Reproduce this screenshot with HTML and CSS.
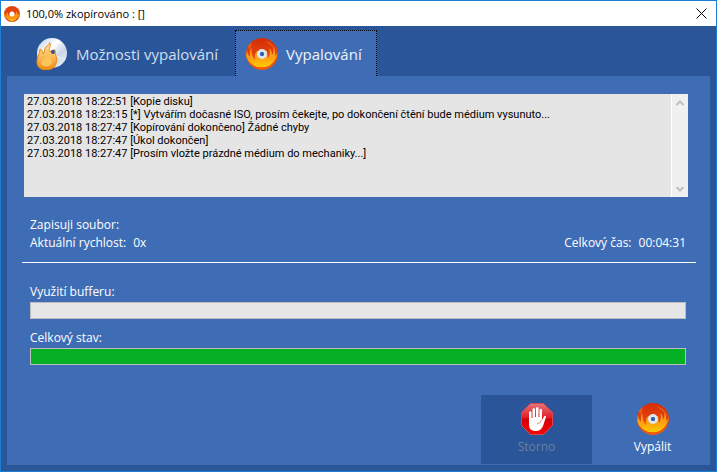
FILE: index.html
```
<!DOCTYPE html>
<html lang="cs">
<head>
    <meta charset="UTF-8">
    <meta name="viewport" content="width=device-width, initial-scale=1.0">
    <title>100,0% zkopírováno : []</title>
    <link rel="stylesheet" href="styles.css">
</head>
<body>
    <svg class="sprite" aria-hidden="true">
        <defs>
            <linearGradient id="discRed" x1="0" y1="0" x2="0" y2="1">
                <stop offset="0" stop-color="#d42c08"/>
                <stop offset="1" stop-color="#f25a0c"/>
            </linearGradient>
            <linearGradient id="discFlame" x1="0" y1="0" x2="0" y2="1">
                <stop offset="0" stop-color="#f58a28"/>
                <stop offset="0.6" stop-color="#fda410"/>
                <stop offset="1" stop-color="#ffce00"/>
            </linearGradient>
            <linearGradient id="silver" x1="0" y1="0" x2="1" y2="1">
                <stop offset="0" stop-color="#b9cbe2"/>
                <stop offset="0.4" stop-color="#ffffff"/>
                <stop offset="0.65" stop-color="#c9d6e8"/>
                <stop offset="1" stop-color="#f2f6fb"/>
            </linearGradient>
            <linearGradient id="gold" x1="0" y1="0" x2="0" y2="1">
                <stop offset="0" stop-color="#fbe0a0"/>
                <stop offset="0.5" stop-color="#fbbf5c"/>
                <stop offset="1" stop-color="#ee8a10"/>
            </linearGradient>
            <linearGradient id="stopRed" x1="0" y1="0" x2="0" y2="1">
                <stop offset="0" stop-color="#e8737a"/>
                <stop offset="0.45" stop-color="#e02026"/>
                <stop offset="0.5" stop-color="#d80008"/>
                <stop offset="1" stop-color="#f00808"/>
            </linearGradient>
        </defs>
        <symbol id="burn" viewBox="0 0 32 32">
            <circle cx="16" cy="16" r="16" fill="url(#discRed)"/>
            <path d="M.8 12C1.500 15 2 17 4 19C3.500 15 4 12 5.500 10C5.500 15 6 18 9 22C8.500 18 9 15 11 13L21 13L22 20C24 18 24 13 23.500 10C25.500 12 26 14 26 17C28 14 28 11 26.500 8C29 10 29.500 14 29 18C30 17 31 16 31.500 14A16 16 0 0 1 .2 18Z" fill="url(#discFlame)"/>
            <path d="M2 8C4 5 5 5 6 4C5 7 5 9 4 12C3 11 2.500 10 2 8ZM19 3C24 4 28 7 30 12C27 9 23 6 19 3Z" fill="#ec5a18"/>
            <circle cx="16" cy="16" r="3.500" fill="#4a76b8" stroke="#dfe5ee" stroke-width="3"/>
            <circle cx="16" cy="16" r="2" fill="#2f5fa6"/>
        </symbol>
        <symbol id="burn-small" viewBox="0 0 16 16">
            <circle cx="8" cy="8" r="8" fill="#e04410"/>
            <path d="M.2 7L2 10L3 6L5 10L8 5L11 9L13 5L14 9L15.800 7A8 8 0 0 1 .2 9Z" fill="#fb9414"/>
            <path d="M3 12Q8 15 13 12Q11 15 8 15.500Q5 15 3 12Z" fill="#fdc020"/>
            <circle cx="8" cy="8" r="2.500" fill="#fff"/>
        </symbol>
        <symbol id="options" viewBox="0 0 32 32">
            <circle cx="16" cy="15" r="15" fill="url(#silver)"/>
            <path d="M19 13L27 6M20 18L29 22" stroke="#dfe8f3" stroke-width="2"/>
            <path d="M8 31.500C3 31 .8 28 1 23C1.200 18 4 16 4 11C6 12 7 14 7 16C9 14 8 11 10 9C12.500 7 13.500 6 13.500 4.500C16 8 11.500 11 14 14C16 12 17 12 19 12C18.500 15 20.500 17 20.500 22C20.500 28 17 31.500 12 31.500Z" fill="url(#gold)" stroke="#e68a18"/>
            <path d="M5 25C6 20 11 21 12 16C13 21 17 21 16 25C15 29 6 30 5 25Z" fill="#fbc45c"/>
            <circle cx="17" cy="14" r="2" fill="#34507c"/>
        </symbol>
        <symbol id="stop" viewBox="0 0 32 32">
            <path d="M9.500.5H22.500L31.500 9.500V22.500L22.500 31.500H9.500L.5 22.500V9.500Z" fill="url(#stopRed)" stroke="#d34a54"/>
            <path d="M8 19V9Q9.200 7.500 10.500 9V15H11.500V6Q12.800 4 14 6V14H15V5Q16.300 3 17.500 5V14H18.500V6.500Q19.800 5 21 6.500V17L23 13.500Q25 12 25 14L22 23Q20 28 15 28Q8 28 8 22Z" fill="#fff"/>
            <path d="M16 21Q20 20 20.500 17" fill="none" stroke="#e88" stroke-width="1"/>
        </symbol>
    </svg>

    <div class="window">
        <header class="titlebar">
            <svg class="app-icon"><use href="#burn-small"/></svg>
            <span class="title">100,0% zkopírováno : []</span>
            <button type="button" class="close" aria-label="Zavřít">
                <svg class="close-icon" viewBox="0 0 11 11"><path d="M.5.5L10.500 10.500M10.500.5L.5 10.500"/></svg>
            </button>
        </header>

        <nav class="tabs" role="tablist">
            <button type="button" class="tab" role="tab" aria-selected="false">
                <svg class="icon"><use href="#options"/></svg>
                Možnosti vypalování
            </button>
            <button type="button" class="tab active" role="tab" aria-selected="true">
                <svg class="icon"><use href="#burn"/></svg>
                Vypalování
            </button>
        </nav>

        <main class="panel">
            <div class="log">
                <textarea class="log-text" readonly aria-label="Protokol">27.03.2018 18:22:51 [Kopie disku]
27.03.2018 18:23:15 [*] Vytvářím dočasné ISO, prosím čekejte, po dokončení čtění bude médium vysunuto...
27.03.2018 18:27:47 [Kopírování dokončeno] Žádné chyby
27.03.2018 18:27:47 [Úkol dokončen]
27.03.2018 18:27:47 [Prosím vložte prázdné médium do mechaniky...]</textarea>
                <div class="scrollbar">
                    <button type="button" class="scroll-btn" disabled aria-label="Nahoru">
                        <svg viewBox="0 0 8 6"><path d="M.5 5L4 1.500L7.500 5"/></svg>
                    </button>
                    <button type="button" class="scroll-btn" disabled aria-label="Dolů">
                        <svg viewBox="0 0 8 6"><path d="M.5 1L4 4.500L7.500 1"/></svg>
                    </button>
                </div>
            </div>

            <div class="status">
                <div class="status-row">Zapisuji soubor:</div>
                <div class="status-row">
                    <span class="pair"><span>Aktuální rychlost:</span><span>0x</span></span>
                    <span class="pair"><span>Celkový čas:</span><span>00:04:31</span></span>
                </div>
            </div>

            <hr class="divider">

            <div class="progress-group">
                <label for="buffer">Využití bufferu:</label>
                <progress id="buffer" class="bar" value="0" max="100"></progress>
            </div>
            <div class="progress-group">
                <label for="total">Celkový stav:</label>
                <progress id="total" class="bar" value="100" max="100"></progress>
            </div>

            <footer class="actions">
                <button type="button" class="action" disabled>
                    <svg class="icon"><use href="#stop"/></svg>
                    Storno
                </button>
                <button type="button" class="action">
                    <svg class="icon"><use href="#burn"/></svg>
                    Vypálit
                </button>
            </footer>
        </main>
    </div>
</body>
</html>
```
FILE: styles.css
```
* {
    box-sizing: border-box;
}

body {
    margin: 0;
    font-family: "Open Sans", "Noto Sans", sans-serif;
    font-size: 12px;
    color: white;
}

button {
    border: none;
    padding: 0;
    background: none;
    font-family: inherit;
    color: inherit;
}

.sprite {
    position: absolute;
    width: 0;
    height: 0;
}

.window {
    display: flex;
    flex-direction: column;
    min-height: 100vh;
    border: 1px solid #1a7fd4;
    background-color: #2a5699;
}

.titlebar {
    display: flex;
    align-items: center;
    height: 25px;
    padding: 0 7px 0 3px;
    background-color: white;
    color: black;
}

.app-icon {
    width: 16px;
    height: 16px;
}

.title {
    flex: 1;
    margin-left: 6px;
    font-size: 11px;
}

.close {
    display: flex;
    padding: 2px;
}

.close-icon {
    width: 11px;
    height: 11px;
    stroke: black;
}

.tabs {
    display: flex;
    gap: 6px;
    padding: 4px 0 0 24px;
}

.tab {
    display: flex;
    align-items: center;
    gap: 8px;
    height: 46px;
    padding: 0 10px;
    border: 1px dotted transparent;
    border-bottom: none;
    font-size: 15px;
    color: #d3deee;
}

.tab.active {
    padding-right: 14px;
    background-color: #3f6db5;
    border-color: black;
    color: #eef3fa;
}

.icon {
    width: 32px;
    height: 32px;
}

.panel {
    display: flex;
    flex-direction: column;
    flex: 1;
    margin: 0 6px 6px;
    padding-top: 18px;
    background-color: #3f6db5;
}

.log {
    display: flex;
    height: 103px;
    margin: 0 22px 0 17px;
    background-color: #e5e5e5;
}

.log-text {
    flex: 1;
    padding: 1px 3px;
    border: none;
    outline: none;
    resize: none;
    overflow: hidden;
    background: none;
    font-family: Roboto, "DejaVu Sans Condensed", sans-serif;
    font-size: 11px;
    line-height: 13px;
    color: black;
}

.scrollbar {
    display: flex;
    flex-direction: column;
    justify-content: space-between;
    width: 17px;
    border-left: 1px solid white;
    background-color: #f0f0f0;
}

.scroll-btn {
    display: flex;
    align-items: center;
    justify-content: center;
    height: 17px;
}

.scroll-btn svg {
    width: 8px;
    height: 6px;
    fill: none;
    stroke: #bfbfbf;
    stroke-width: 2;
}

.status {
    margin: 19px 24px 0 23px;
}

.status-row {
    display: flex;
    justify-content: space-between;
    line-height: 18px;
}

.pair {
    display: flex;
    gap: 7px;
}

.divider {
    width: auto;
    height: 1px;
    margin: 10px 14px 12px 15px;
    border: none;
    background-color: white;
}

.progress-group {
    display: flex;
    flex-direction: column;
    margin: 0 24px 2px 23px;
    padding-top: 8px;
}

.progress-group label {
    line-height: 18px;
    margin-bottom: 1px;
}

.bar {
    appearance: none;
    width: 100%;
    height: 17px;
    border: 1px solid #bcbcbc;
    background-color: #e6e6e6;
}

.bar::-webkit-progress-bar {
    background-color: #e6e6e6;
}

.bar::-webkit-progress-value {
    background-color: #06b025;
}

.bar::-moz-progress-bar {
    background-color: #06b025;
}

.actions {
    display: flex;
    justify-content: flex-end;
    gap: 5px;
    margin-top: auto;
    padding: 0 2px 1px;
}

.action {
    display: flex;
    flex-direction: column;
    align-items: center;
    width: 111px;
    height: 69px;
    padding-top: 8px;
    font-size: 12px;
    line-height: 24px;
}

.action:disabled {
    background-color: #2a5699;
    color: #6b7f9c;
}
```
